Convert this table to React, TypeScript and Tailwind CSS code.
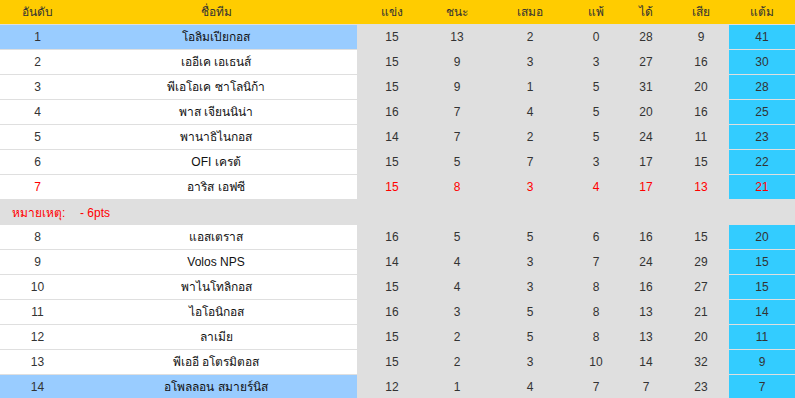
import React from 'react';

type Row = {
  pos: number;
  team: string;
  p: number;
  w: number;
  d: number;
  l: number;
  gf: number;
  ga: number;
  pts: number;
  hl?: boolean;
  red?: boolean;
};

const top: Row[] = [
  { pos: 1, team: 'โอลิมเปียกอส', p: 15, w: 13, d: 2, l: 0, gf: 28, ga: 9, pts: 41, hl: true },
  { pos: 2, team: 'เออีเค เอเธนส์', p: 15, w: 9, d: 3, l: 3, gf: 27, ga: 16, pts: 30 },
  { pos: 3, team: 'พีเอโอเค ซาโลนิก้า', p: 15, w: 9, d: 1, l: 5, gf: 31, ga: 20, pts: 28 },
  { pos: 4, team: 'พาส เจียนนิน่า', p: 16, w: 7, d: 4, l: 5, gf: 20, ga: 16, pts: 25 },
  { pos: 5, team: 'พานาธิไนกอส', p: 14, w: 7, d: 2, l: 5, gf: 24, ga: 11, pts: 23 },
  { pos: 6, team: 'OFI เครต้', p: 15, w: 5, d: 7, l: 3, gf: 17, ga: 15, pts: 22 },
  { pos: 7, team: 'อาริส เอฟซี', p: 15, w: 8, d: 3, l: 4, gf: 17, ga: 13, pts: 21, red: true },
];

const bottom: Row[] = [
  { pos: 8, team: 'แอสเตราส', p: 16, w: 5, d: 5, l: 6, gf: 16, ga: 15, pts: 20 },
  { pos: 9, team: 'Volos NPS', p: 14, w: 4, d: 3, l: 7, gf: 24, ga: 29, pts: 15 },
  { pos: 10, team: 'พาไนโทลิกอส', p: 15, w: 4, d: 3, l: 8, gf: 16, ga: 27, pts: 15 },
  { pos: 11, team: 'ไอโอนิกอส', p: 16, w: 3, d: 5, l: 8, gf: 13, ga: 21, pts: 14 },
  { pos: 12, team: 'ลาเมีย', p: 15, w: 2, d: 5, l: 8, gf: 13, ga: 20, pts: 11 },
  { pos: 13, team: 'พีเออี อโตรมิตอส', p: 15, w: 2, d: 3, l: 10, gf: 14, ga: 32, pts: 9 },
  { pos: 14, team: 'อโพลลอน สมายร์นิส', p: 12, w: 1, d: 4, l: 7, gf: 7, ga: 23, pts: 7, hl: true },
];

const cols = 'grid grid-cols-[75px_282px_70px_60px_86px_46px_54px_56px_66px]';

const TableRow: React.FC<{ r: Row }> = ({ r }) => {
  const num = r.red ? 'text-[#ff0000]' : 'text-[#333333]';
  const side = r.hl ? 'bg-[#99ccff]' : 'bg-white';
  return (
    <div className={`${cols} h-[25px] border-b border-[#dfdfdf] text-[12px] leading-[24px] text-center`}>
      <div className={`${side} ${num}`}>{r.pos}</div>
      <div className={`${side} text-[#111111]`}>{r.team}</div>
      <div className={`bg-[#dfdfdf] ${num}`}>{r.p}</div>
      <div className={`bg-[#dfdfdf] ${num}`}>{r.w}</div>
      <div className={`bg-[#dfdfdf] ${num}`}>{r.d}</div>
      <div className={`bg-[#dfdfdf] ${num}`}>{r.l}</div>
      <div className={`bg-[#dfdfdf] ${num}`}>{r.gf}</div>
      <div className={`bg-[#dfdfdf] ${num}`}>{r.ga}</div>
      <div className={`bg-[#33ccff] ${num}`}>{r.pts}</div>
    </div>
  );
};

export default function App() {
  const heads = ['อันดับ', 'ชื่อทีม', 'แข่ง', 'ชนะ', 'เสมอ', 'แพ้', 'ได้', 'เสีย', 'แต้ม'];
  return (
    <div className="w-[795px] h-[398px] overflow-hidden bg-white font-['Liberation_Sans',Tahoma,sans-serif]">
      <div className={`${cols} h-[25px] bg-[#ffcc00] border-b border-[#dfdfdf] text-[12px] leading-[24px] text-center text-[#333333]`}>
        {heads.map((h) => (
          <div key={h}>{h}</div>
        ))}
      </div>
      {top.map((r) => (
        <TableRow key={r.pos} r={r} />
      ))}
      <div className="h-[25px] bg-[#dfdfdf] flex items-center text-[12px] text-[#ff0000] pl-[12px]">
        <span className="w-[68px] shrink-0">หมายเหตุ:</span>
        <span>- 6pts</span>
      </div>
      {bottom.map((r) => (
        <TableRow key={r.pos} r={r} />
      ))}
    </div>
  );
}
